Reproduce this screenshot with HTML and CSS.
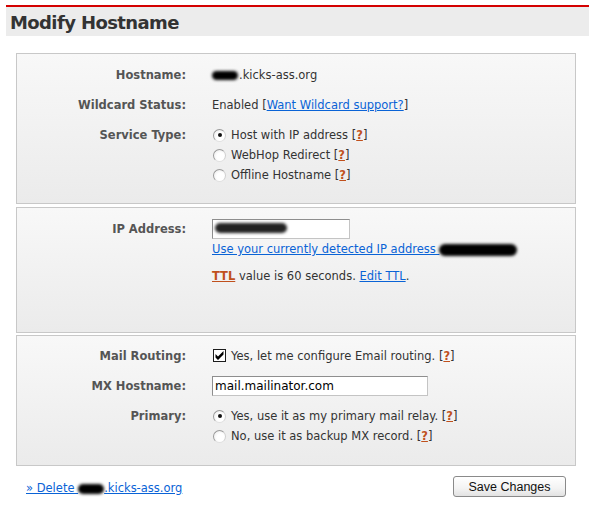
FILE: index.html
```html
<!DOCTYPE html>
<html>
<head>
<meta charset="utf-8">
<link rel="stylesheet" href="styles.css">
</head>
<body>
<div class="page">
  <h1 class="title">Modify Hostname</h1>

  <div class="panel p1">
    <div class="row">
      <div class="label">Hostname:</div>
      <div class="value"><span class="blur blur-host"></span>.kicks-ass.org</div>
    </div>
    <div class="row">
      <div class="label">Wildcard Status:</div>
      <div class="value">Enabled [<a class="link" href="#">Want Wildcard support?</a>]</div>
    </div>
    <div class="row">
      <div class="label">Service Type:</div>
      <div class="value options">
        <div class="opt"><span class="radio on"></span>Host with IP address [<a class="help" href="#">?</a>]</div>
        <div class="opt"><span class="radio"></span>WebHop Redirect [<a class="help" href="#">?</a>]</div>
        <div class="opt"><span class="radio"></span>Offline Hostname [<a class="help" href="#">?</a>]</div>
      </div>
    </div>
  </div>

  <div class="panel p2">
    <div class="row">
      <div class="label">IP Address:</div>
      <div class="value">
        <div class="input ip"><span class="blur blur-ip"></span></div>
        <div class="line"><a class="link" href="#">Use your currently detected IP address <span class="blur blur-det"></span></a></div>
        <div class="line ttl"><a class="help" href="#">TTL</a> value is 60 seconds. <a class="link" href="#">Edit TTL</a>.</div>
      </div>
    </div>
  </div>

  <div class="panel p3">
    <div class="row">
      <div class="label">Mail Routing:</div>
      <div class="value"><span class="check"><svg width="13" height="13" viewBox="0 0 13 13"><rect x="0.5" y="0.5" width="12" height="12" fill="#fff" stroke="#1c1c1c"/><path d="M2.5 5 L5 7.5 L10.5 2 L10.5 5.5 L5 11 L2.5 8.5 Z" fill="#000"/></svg></span>Yes, let me configure Email routing. [<a class="help" href="#">?</a>]</div>
    </div>
    <div class="row">
      <div class="label">MX Hostname:</div>
      <div class="value"><div class="input mx">mail.mailinator.com</div></div>
    </div>
    <div class="row">
      <div class="label">Primary:</div>
      <div class="value options">
        <div class="opt"><span class="radio on"></span>Yes, use it as my primary mail relay. [<a class="help" href="#">?</a>]</div>
        <div class="opt"><span class="radio"></span>No, use it as backup MX record. [<a class="help" href="#">?</a>]</div>
      </div>
    </div>
  </div>

  <div class="footer">
    <a class="link delete" href="#">» Delete <span class="blur blur-del"></span>.kicks-ass.org</a>
    <button class="btn" type="button">Save Changes</button>
  </div>
</div>
</body>
</html>
```

FILE: styles.css
```css
html, body {
  margin: 0;
  padding: 0;
  background: #fff;
}
.page {
  padding-top: 5px;
  font-family: "DejaVu Sans", Verdana, sans-serif;
  font-size: 11.5px;
  color: #333;
}
.title {
  margin: 0 0 0 6px;
  border-top: 2px solid #d40000;
  background: #ececec;
  height: 29px;
  line-height: 31px;
  padding-left: 4px;
  font-size: 18px;
  letter-spacing: -0.6px;
  font-weight: bold;
  color: #333;
}
.panel {
  margin-left: 16px;
  width: 558px;
  border: 1px solid #c8c8c8;
  background: linear-gradient(#f8f8f8, #ebebeb);
}
.p1 { margin-top: 17px; padding: 11px 0 18px; }
.p2 { margin-top: 3px; padding: 11px 0 46px; }
.p3 { margin-top: 2px; padding: 10px 0 19px; }
.row {
  display: flex;
  line-height: 20px;
  margin-bottom: 10px;
}
.row:last-child { margin-bottom: 0; }
.label {
  width: 169px;
  padding-right: 26px;
  text-align: right;
  font-weight: bold;
  color: #555;
  flex: none;
}
.value { flex: 1; }
.opt { display: flex; align-items: center; height: 20px; }
.radio {
  display: inline-block;
  box-sizing: border-box;
  width: 13px;
  height: 13px;
  border-radius: 50%;
  border: 1px solid #9a9a9a;
  border-bottom-color: #e0e0e0;
  border-right-color: #d0d0d0;
  background: radial-gradient(circle at 60% 60%, #fff 40%, #e6e6e6 100%);
  margin: 0 5px 0 1px;
  position: relative;
}
.radio.on::after {
  content: "";
  position: absolute;
  left: 3.5px;
  top: 3.5px;
  width: 4px;
  height: 4px;
  border-radius: 50%;
  background: #111;
}
.check {
  display: inline-block;
  width: 13px;
  height: 13px;
  vertical-align: -2px;
  margin: 0 5px 0 1px;
}
.check svg { display: block; }
.link { color: #0a63d6; text-decoration: underline; }
.help {
  color: #c0501c;
  font-weight: bold;
  text-decoration: underline;
}
.input {
  box-sizing: border-box;
  height: 20px;
  border: 1px solid #8e8e8e;
  border-right-color: #c4c4c4;
  border-bottom-color: #c4c4c4;
  background: #fff;
  line-height: 18px;
  padding-left: 2px;
  font-size: 12px;
  color: #000;
}
.input.ip { width: 138px; }
.input.mx { width: 216px; }
.ttl { margin-top: 7px; }
.blur {
  display: inline-block;
  background: #000;
  border-radius: 6px;
  filter: blur(1.5px);
  vertical-align: middle;
}
.blur-host { width: 26px; height: 9px; margin-right: 1px; }
.blur-ip { width: 72px; height: 10px; margin-top: 3px; display: block; background: #222; }
.blur-det { width: 78px; height: 12px; }
.blur-del { width: 26px; height: 10px; }
.footer {
  display: flex;
  justify-content: space-between;
  align-items: flex-start;
  margin: 10px 23px 0 26px;
}
.delete {
  display: block;
  padding-top: 5px;
  line-height: 14px;
}
.btn {
  width: 113px;
  height: 21px;
  padding: 0;
  font-family: "Liberation Sans", Arial, sans-serif;
  font-size: 12.5px;
  color: #111;
  border: 1px solid #8a8a8a;
  border-radius: 3px;
  background: linear-gradient(#fff, #f3f3f3 60%, #e2e2e2);
}
```
